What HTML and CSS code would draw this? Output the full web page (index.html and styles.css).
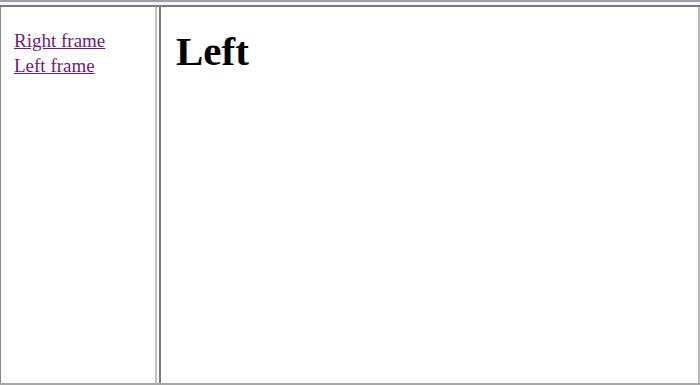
FILE: index.html
```html
<!DOCTYPE html>
<html lang="en">
<head>
    <meta charset="UTF-8">
    <title>Frames</title>
    <link rel="stylesheet" href="styles.css">
</head>
<body>
    <div class="window">
        <div class="top-edge"></div>
        <div class="frameset">
            <div class="frame frame-nav">
                <a href="#right" class="nav-link">Right frame</a>
                <a href="#left" class="nav-link">Left frame</a>
            </div>
            <div class="frame-divider"></div>
            <div class="frame frame-main">
                <h1 class="page-title">Left</h1>
            </div>
        </div>
    </div>
</body>
</html>
```

FILE: styles.css
```css
html, body {
    margin: 0;
    padding: 0;
    background: #ffffff;
}

.window {
    width: 700px;
    height: 385px;
    display: flex;
    flex-direction: column;
    font-family: "Liberation Serif", "Times New Roman", serif;
}

.top-edge {
    height: 3px;
    border-top: 2px solid #a0a0a4;
    border-bottom: 2px solid #7c7c7c;
    background: #f2f4f8;
}

.frameset {
    flex: 1;
    display: flex;
    border-bottom: 2px solid #a8a8a8;
}

.frame {
    box-sizing: border-box;
    background: #ffffff;
}

.frame-nav {
    width: 155px;
    border-left: 1px solid #8a8a8a;
    padding: 21px 0 0 13px;
    display: flex;
    flex-direction: column;
}

.nav-link {
    font-size: 19px;
    line-height: 25px;
    color: #6e1a7e;
    text-decoration: underline;
}

.frame-divider {
    width: 2px;
    border-left: 2px solid #c4c4c4;
    border-right: 2px solid #7c7c7c;
    background: #f8f8f8;
}

.frame-main {
    flex: 1;
    border-right: 2px solid #b4b4b4;
    padding: 0 0 0 15px;
}

.page-title {
    margin: 20px 0 0;
    font-size: 41px;
    line-height: 48px;
    font-weight: bold;
    color: #000000;
}
```
